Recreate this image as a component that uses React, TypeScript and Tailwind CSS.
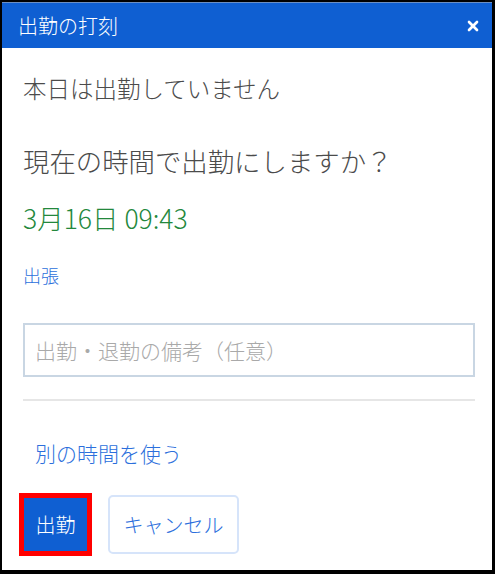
import { X } from "lucide-react";

const jp = "font-['Noto_Sans_CJK_JP','Noto_Sans',sans-serif]";

export default function App() {
  return (
    <div className={`w-[495px] h-[574px] bg-black pl-[2px] pt-[2px] pr-[3px] pb-[4px] ${jp}`}>
      <div className="w-full h-full bg-white flex flex-col">
        {/* header */}
        <div className="h-[46px] bg-[#0f5fd2] border-t border-[#6b8fc4] flex items-center justify-between pl-[16px] pr-[11px]">
          <span className="text-white text-[20px] leading-[28px] font-light">出勤の打刻</span>
          <X className="w-[16px] h-[16px] text-white" strokeWidth={4} />
        </div>

        <div className="flex flex-col pl-[21px] pr-[17px] font-light">
          <p className="mt-[24px] text-[23.5px] leading-[32px] text-[#4b4b4b]">本日は出勤していません</p>
          <p className="mt-[39px] text-[26.4px] leading-[36px] text-[#4b4b4b]">現在の時間で出勤にしますか？</p>
          <p className="mt-[24px] text-[26.5px] leading-[30px] text-[#23883c]">3月16日 09:43</p>
          <a className="mt-[30px] text-[18px] leading-[24px] text-[#2c6fdc] self-start">出張</a>

          <div className="mt-[36px] h-[54px] border-2 border-[#c9d6e3] flex items-center pl-[10px]">
            <span className="text-[21px] leading-[28px] text-[#a9a9a9]">出勤・退勤の備考（任意）</span>
          </div>

          <div className="mt-[22px] h-[2px] bg-[#e6e6e6]" />

          <a className="mt-[38px] pl-[12px] text-[21px] leading-[28px] text-[#2c6fdc] self-start">別の時間を使う</a>

          <div className="mt-[26px] -ml-[4px] flex items-center gap-[16px]">
            <button className="w-[73px] h-[63px] border-[5px] border-[#ff0000] bg-[#0f5fd2] text-white text-[20px] leading-[28px] flex items-center justify-center">
              出勤
            </button>
            <button className="w-[131px] h-[59px] border-2 border-[#d6e4fa] rounded-[5px] bg-white text-[#2c6fdc] text-[20px] leading-[28px] flex items-center justify-center">
              キャンセル
            </button>
          </div>
        </div>
      </div>
    </div>
  );
}
